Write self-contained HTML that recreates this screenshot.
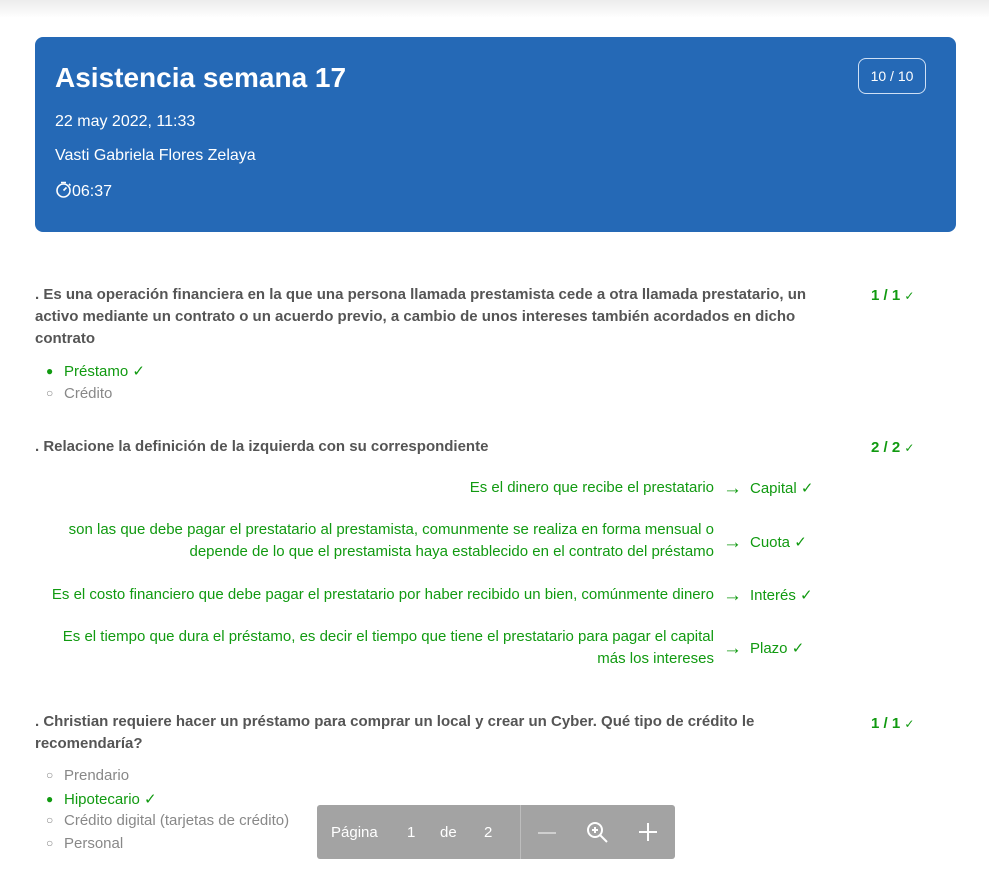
<!DOCTYPE html>
<html><head><meta charset="utf-8"><style>
body{margin:0;width:989px;height:870px;overflow:hidden;background:#fff;font-family:"Liberation Sans",Arial,sans-serif;position:relative}
.top{position:absolute;left:0;top:0;width:989px;height:18px;background:linear-gradient(#ececec,#fff)}
.card{position:absolute;left:35px;top:37px;width:921px;height:195px;background:#2569b6;border-radius:8px;color:#fff}
.card h1{position:absolute;left:20px;top:25px;margin:0;font-size:28px;font-weight:bold}
.card .l{position:absolute;left:20px;font-size:16px}
.badge{position:absolute;right:30px;top:21px;width:66px;height:34px;border:1px solid #cfe0f5;border-radius:8px;font-size:14px;line-height:34px;text-align:center}
.q{position:absolute;left:35px;width:790px;font-size:15px;font-weight:bold;color:#555;line-height:22px}
.sc{position:absolute;left:871px;font-size:15px;font-weight:bold;color:#119a11}
.sc i{font-style:normal;font-weight:normal;font-size:12px}
.o{position:absolute;left:46px;font-size:15px;color:#888}
.o.g{color:#119a11}
.o span{display:inline-block;width:18px;font-size:12px;vertical-align:1px}
.m{position:absolute;right:275px;width:672px;text-align:right;font-size:15px;color:#119a11;line-height:22px}
.a{position:absolute;left:723px;font-size:15px;color:#119a11}
.a b{font-weight:normal;font-size:19px;display:inline-block;width:27px;vertical-align:-1px}
.pg{position:absolute;left:317px;top:805px;width:358px;height:54px;background:#a3a3a3;border-radius:3px;color:#fff;font-size:15px}
.pg span{position:absolute;top:19px}
</style></head><body>
<div class="top"></div>
<div class="card">
<h1>Asistencia semana 17</h1>
<div class="l" style="top:76px">22 may 2022, 11:33</div>
<div class="l" style="top:110px">Vasti Gabriela Flores Zelaya</div>
<div class="l" style="top:144px"><svg width="17" height="17" viewBox="0 0 17 17" fill="none" stroke="#fff" stroke-width="1.6" style="vertical-align:-2px"><circle cx="8.5" cy="9.5" r="6.5"/><path d="M6 1.5h5M8.5 9.5l3-3M14 3l1.5 1.5"/></svg>06:37</div>
<div class="badge">10 / 10</div>
</div>
<div class="q" style="top:284px">. Es una operación financiera en la que una persona llamada prestamista cede a otra llamada prestatario, un activo mediante un contrato o un acuerdo previo, a cambio de unos intereses también acordados en dicho contrato</div>
<div class="sc" style="top:287px">1 / 1 <i>✓</i></div>
<div class="o g" style="top:362px"><span>●</span>Préstamo ✓</div>
<div class="o" style="top:385px"><span>○</span>Crédito</div>
<div class="q" style="top:436px">. Relacione la definición de la izquierda con su correspondiente</div>
<div class="sc" style="top:439px">2 / 2 <i>✓</i></div>
<div class="m" style="top:477px">Es el dinero que recibe el prestatario</div><div class="a" style="top:478px"><b>→</b>Capital ✓</div>
<div class="m" style="top:519px">son las que debe pagar el prestatario al prestamista, comunmente se realiza en forma mensual o depende de lo que el prestamista haya establecido en el contrato del préstamo</div><div class="a" style="top:532px"><b>→</b>Cuota ✓</div>
<div class="m" style="top:584px">Es el costo financiero que debe pagar el prestatario por haber recibido un bien, comúnmente dinero</div><div class="a" style="top:585px"><b>→</b>Interés ✓</div>
<div class="m" style="top:626px">Es el tiempo que dura el préstamo, es decir el tiempo que tiene el prestatario para pagar el capital más los intereses</div><div class="a" style="top:638px"><b>→</b>Plazo ✓</div>
<div class="q" style="top:711px">. Christian requiere hacer un préstamo para comprar un local y crear un Cyber. Qué tipo de crédito le recomendaría?</div>
<div class="sc" style="top:715px">1 / 1 <i>✓</i></div>
<div class="o" style="top:767px"><span>○</span>Prendario</div>
<div class="o g" style="top:790px"><span>●</span>Hipotecario ✓</div>
<div class="o" style="top:812px"><span>○</span>Crédito digital (tarjetas de crédito)</div>
<div class="o" style="top:835px"><span>○</span>Personal</div>
<div class="pg">
<span style="left:14px">Página</span><span style="left:90px">1</span><span style="left:123px">de</span><span style="left:167px">2</span>
<div style="position:absolute;left:203px;top:0;width:1px;height:54px;background:#bdbdbd"></div>
<div style="position:absolute;left:221px;top:27px;width:18px;height:2px;background:#cfcfcf"></div>
<svg style="position:absolute;left:269px;top:16px" width="24" height="24" viewBox="0 0 24 24" fill="none" stroke="#fff" stroke-width="2"><circle cx="9" cy="9" r="7"/><path d="M14 14l7 7M9 6v6M6 9h6"/></svg>
<svg style="position:absolute;left:321px;top:17px" width="20" height="20" viewBox="0 0 20 20" stroke="#fff" stroke-width="2"><path d="M10 1v18M1 10h18"/></svg>
</div>
</body></html>
